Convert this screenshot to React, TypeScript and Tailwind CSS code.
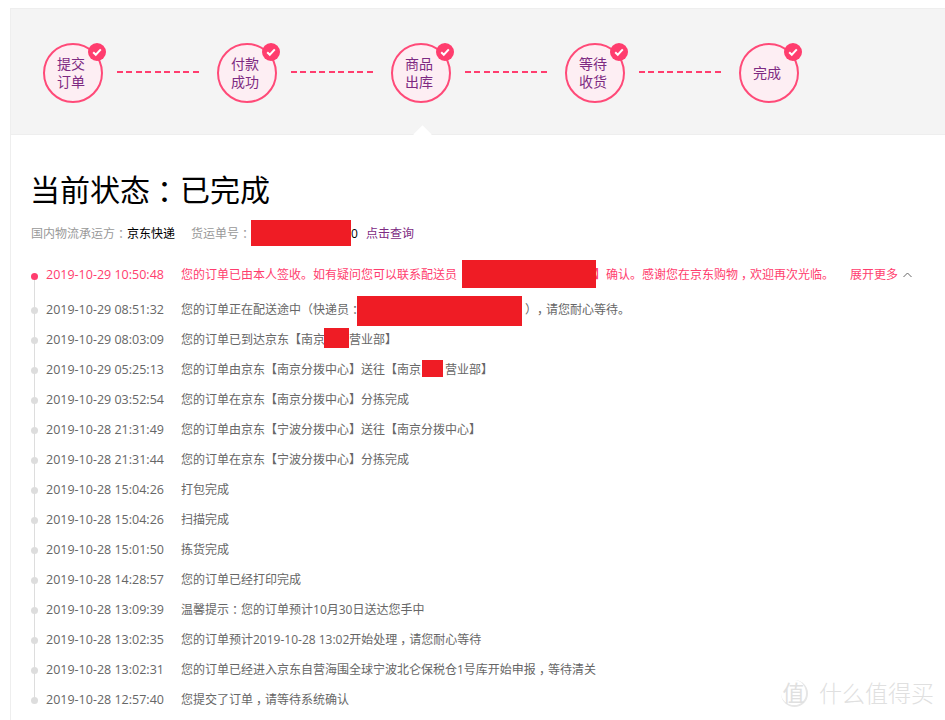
import React from "react";

const font = { fontFamily: '"Open Sans","Noto Sans CJK SC",sans-serif' };

const steps = [["提交", "订单"], ["付款", "成功"], ["商品", "出库"], ["等待", "收货"], ["完成"]];

function Red({ w, h }: { w: string; h: string }) {
  return <span className={`block shrink-0 bg-[#ef1c25] ${w} ${h}`} />;
}

/* full-width punctuation sits mid-cell in the reference */
function P({ c }: { c: string }) {
  return <span className="inline-block px-[3px] [font-feature-settings:'halt']">{c}</span>;
}

function Step({ lines }: { lines: string[] }) {
  return (
    <div className="relative flex h-[60px] w-[60px] shrink-0 flex-col items-center justify-center rounded-full border-2 border-[#ff4a78] bg-[#fdeef3] pr-1 text-[14px] leading-[18px] text-[#7d2a82]">
      {lines.map((l) => (
        <span key={l}>{l}</span>
      ))}
      <span className="absolute left-[43px] top-[-2px] flex h-[18px] w-[18px] items-center justify-center rounded-full bg-[#ff3d6e]">
        <svg width="12" height="12" viewBox="0 0 12 12" fill="none">
          <path d="M2.2 6.2 4.8 8.8 9.8 3.4" stroke="#fff" strokeWidth="2" />
        </svg>
      </span>
    </div>
  );
}

const rows: [string, React.ReactNode][] = [
  ["2019-10-29 08:51:32", <>
    <span>您的订单正在配送途中（快递员<P c="：" /></span>
    <span className="ml-[-4px] mt-[2px]"><Red w="w-[165px]" h="h-[30px]" /></span>
    <span><span className="inline-block pl-[3px] pr-[3px] [font-feature-settings:'halt']">）</span><P c="，" />请您耐心等待。</span>
  </>],
  ["2019-10-29 08:03:09", <>
    <span>您的订单已到达京东【南京</span>
    <span className="mb-[4px] ml-[-1px]"><Red w="w-[25px]" h="h-[20px]" /></span>
    <span>营业部】</span>
  </>],
  ["2019-10-29 05:25:13", <>
    <span>您的订单由京东【南京分拨中心】送往【南京</span>
    <span className="mb-[4px] ml-[1px] mr-[2px]"><Red w="w-[21px]" h="h-[17px]" /></span>
    <span>营业部】</span>
  </>],
  ["2019-10-29 03:52:54", "您的订单在京东【南京分拨中心】分拣完成"],
  ["2019-10-28 21:31:49", "您的订单由京东【宁波分拨中心】送往【南京分拨中心】"],
  ["2019-10-28 21:31:44", "您的订单在京东【宁波分拨中心】分拣完成"],
  ["2019-10-28 15:04:26", "打包完成"],
  ["2019-10-28 15:04:26", "扫描完成"],
  ["2019-10-28 15:01:50", "拣货完成"],
  ["2019-10-28 14:28:57", "您的订单已经打印完成"],
  ["2019-10-28 13:09:39", <span>温馨提示<P c="：" />您的订单预计10月30日送达您手中</span>],
  ["2019-10-28 13:02:35", <span>您的订单预计2019-10-28 13:02开始处理<P c="，" />请您耐心等待</span>],
  ["2019-10-28 13:02:31", <span>您的订单已经进入京东自营海围全球宁波北仑保税仓1号库开始申报<P c="，" />等待清关</span>],
  ["2019-10-28 12:57:40", <span>您提交了订单<P c="，" />请等待系统确认</span>],
];

export default function App() {
  return (
    <div className="relative h-[720px] w-[945px] overflow-hidden bg-white pl-[10px] pt-[8px] [text-spacing-trim:space-all]" style={font}>
      <div className="h-[712px] border-l border-t border-[#eeeeee]">
        <div className="relative flex h-[126px] items-start border-b border-[#eeeeee] bg-[#f4f4f4] pl-[32px] pt-[34px]">
          {steps.map((s, i) => (
            <React.Fragment key={s[0]}>
              <Step lines={s} />
              {i < 4 && (
                <div className="ml-[14px] mr-[18px] mt-[28px] h-[2px] w-[82px] shrink-0 bg-[repeating-linear-gradient(90deg,#ff3d6e_0_6px,transparent_6px_9.45px)]" />
              )}
            </React.Fragment>
          ))}
          <div className="absolute bottom-[-7px] left-[405px] h-[13px] w-[13px] rotate-45 bg-white" />
        </div>

        <div className="pl-[20px]">
          <h1 className="ml-[-1px] mt-[35px] h-[40px] text-[30px] font-normal leading-[40px] text-black">
            当前状态<span className="inline-block pl-[7px] pr-[8px] [font-feature-settings:'halt']">：</span>已完成
          </h1>
          <div className="mt-[11px] flex h-[26px] items-center text-[12px] text-[#999999]">
            <span>国内物流承运方<P c="：" /></span>
            <span className="text-black">京东快递</span>
            <span className="ml-[16px]">货运单号<P c="：" /></span>
            <span className="mb-[2px]"><Red w="w-[100px]" h="h-[26px]" /></span>
            <span className="text-black">0</span>
            <span className="ml-[8px] text-[#7d2a82]">点击查询</span>
          </div>

          <div className="relative mt-[13px] text-[12px] text-[#666666]">
            <div className="absolute left-[3px] top-[17px] h-[423px] w-[1px] bg-[#dddddd]" />
            <div className="mb-[5px] flex h-[30px] items-center whitespace-nowrap text-[#ff3d6e]">
              <span className="relative z-10 mt-[3px] h-[7px] w-[7px] shrink-0 rounded-full bg-[#ff3d6e]" />
              <span className="ml-[8px] w-[135px] shrink-0 text-[12.5px]">2019-10-29 10:50:48</span>
              <span className="flex items-center">
                <span>您的订单已由本人签收。如有疑问您可以联系配送员</span>
                <span className="ml-[137px]">】</span>
                <span className="mb-[2px] ml-[-144px]"><Red w="w-[134px]" h="h-[28px]" /></span>
                <span className="ml-[10px]">确认。感谢您在京东购物<P c="，" />欢迎再次光临。</span>
                <span className="ml-[16px]">展开更多</span>
                <svg className="ml-[5px]" width="9" height="6" viewBox="0 0 9 6" fill="none">
                  <path d="M.5 5 4.5 1l4 4" stroke="#666666" />
                </svg>
              </span>
            </div>
            {rows.map(([t, c], i) => (
              <div key={i} className="flex h-[30px] items-center whitespace-nowrap">
                <span className="relative z-10 h-[7px] w-[7px] shrink-0 rounded-full bg-[#dddddd]" />
                <span className="ml-[8px] w-[135px] shrink-0 text-[12.5px]">{t}</span>
                <span className="flex items-center">{c}</span>
              </div>
            ))}
          </div>
        </div>
      </div>

      <div className="absolute left-[781px] top-[679px] flex items-center text-[#e0e0e0]">
        <span className="flex h-[27px] w-[27px] items-center justify-center rounded-full border-b-2 border-r-2 border-[#e6e6e6] text-[22px] leading-none">值</span>
        <span className="ml-[11px] text-[23px] font-light leading-[28px]">什么值得买</span>
      </div>
    </div>
  );
}
